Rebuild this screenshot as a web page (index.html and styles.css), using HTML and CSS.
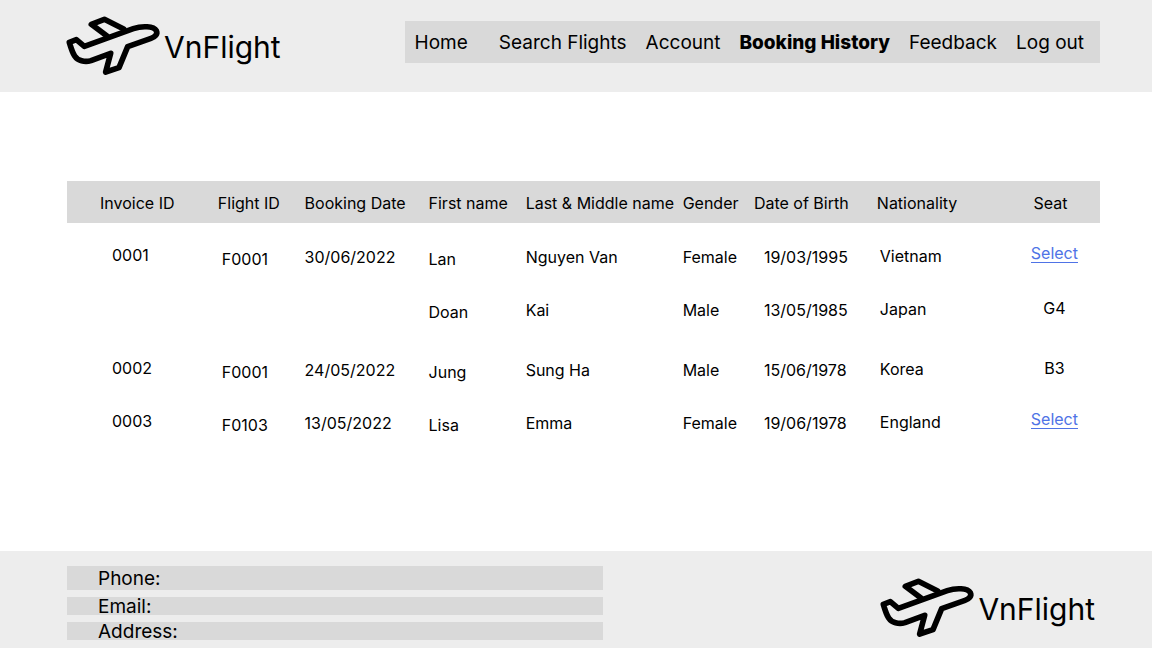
FILE: index.html
```html
<!DOCTYPE html>
<html lang="en">
<head>
<meta charset="utf-8">
<meta name="viewport" content="width=device-width, initial-scale=1">
<title>VnFlight - Booking History</title>
<link rel="stylesheet" href="styles.css">
</head>
<body class="page">
<svg width="0" height="0" class="sprite" aria-hidden="true">
  <symbol id="plane" viewBox="0 0 306 198">
    <path d="M22 91 L43 83 L67 103 L214 50 C240 41 275 42 283 56 C288 66 279 75 267 79 L197 104 L171 167 L131 180 L146 124 L87 146 C68 152 47 146 38 132 C32 123 27 108 22 91 Z"/>
    <path d="M135 72 L88 37 L127 22 L185 51"/>
  </symbol>
</svg>
<header class="site-header">
  <a class="logo" href="#"><svg class="logo-icon" aria-hidden="true"><use href="#plane"/></svg><span class="logo-name">VnFlight</span></a>
  <nav class="nav" aria-label="Main">
    <a class="nav-link nav-home" href="#">Home</a>
    <a class="nav-link" href="#">Search Flights</a>
    <a class="nav-link" href="#">Account</a>
    <a class="nav-link nav-current" href="#" aria-current="page">Booking History</a>
    <a class="nav-link" href="#">Feedback</a>
    <a class="nav-link" href="#">Log out</a>
  </nav>
</header>
<main class="content">
  <table class="bookings">
    <colgroup>
      <col class="w-invoice"><col class="w-flight"><col class="w-date"><col class="w-first"><col class="w-last"><col class="w-gender"><col class="w-birth"><col class="w-nation"><col class="w-seat">
    </colgroup>
    <thead>
      <tr>
        <th scope="col" class="invoice">Invoice ID</th><th scope="col">Flight ID</th><th scope="col">Booking Date</th><th scope="col">First name</th><th scope="col">Last &amp; Middle name</th><th scope="col">Gender</th><th scope="col">Date of Birth</th><th scope="col">Nationality</th><th scope="col" class="seat">Seat</th>
      </tr>
    </thead>
    <tbody class="booking">
      <tr><td class="invoice">0001</td><td class="flight">F0001</td><td>30/06/2022</td><td class="first">Lan</td><td>Nguyen Van</td><td>Female</td><td class="birth">19/03/1995</td><td class="nation">Vietnam</td><td class="seat"><a class="select" href="#">Select</a></td></tr>
      <tr class="passenger"><td class="invoice"></td><td class="flight"></td><td></td><td class="first">Doan</td><td>Kai</td><td>Male</td><td class="birth">13/05/1985</td><td class="nation">Japan</td><td class="seat">G4</td></tr>
    </tbody>
    <tbody class="booking">
      <tr><td class="invoice">0002</td><td class="flight">F0001</td><td>24/05/2022</td><td class="first">Jung</td><td>Sung Ha</td><td>Male</td><td class="birth">15/06/1978</td><td class="nation">Korea</td><td class="seat">B3</td></tr>
    </tbody>
    <tbody class="booking">
      <tr><td class="invoice">0003</td><td class="flight">F0103</td><td>13/05/2022</td><td class="first">Lisa</td><td>Emma</td><td>Female</td><td class="birth">19/06/1978</td><td class="nation">England</td><td class="seat"><a class="select" href="#">Select</a></td></tr>
    </tbody>
  </table>
</main>
<footer class="site-footer">
  <address class="contact">
    <p class="contact-line contact-phone">Phone:</p>
    <p class="contact-line">Email:</p>
    <p class="contact-line">Address:</p>
  </address>
  <a class="logo" href="#"><svg class="logo-icon" aria-hidden="true"><use href="#plane"/></svg><span class="logo-name">VnFlight</span></a>
</footer>
</body>
</html>
```
FILE: styles.css
```css
* { box-sizing: border-box; }
.page {
  margin: 0;
  min-height: 100vh;
  display: flex;
  flex-direction: column;
  background: #fff;
  color: #000;
  font-family: Inter, "Liberation Sans", sans-serif;
  font-size: 16px;
  font-weight: 400;
}
.sprite { position: absolute; }
.site-header {
  display: flex;
  align-items: center;
  justify-content: space-between;
  padding: 12px 52px 14px 62px;
  background: #ededed;
}
.logo {
  display: flex;
  align-items: center;
  color: #000;
  font-size: 30px;
  line-height: 36px;
  text-decoration: none;
}
.logo-name { padding-top: 4px; }
.logo-icon {
  width: 102px;
  height: 66px;
  fill: none;
  stroke: #000;
  stroke-width: 17;
  stroke-linecap: round;
  stroke-linejoin: round;
}
.nav {
  display: flex;
  gap: 19px;
  align-self: flex-start;
  margin-top: 9px;
  padding: 10px 16px 8px 10px;
  background: #d9d9d9;
  white-space: nowrap;
}
.nav-link {
  color: #000;
  font-size: 19px;
  line-height: 24px;
  text-decoration: none;
}
.nav-home { margin-right: 12px; }
.nav-current { font-weight: 800; }
.content {
  flex: 1;
  padding: 89px 52px 89px 67px;
}
.bookings {
  width: 100%;
  table-layout: fixed;
  border-collapse: separate;
  border-spacing: 0;
  line-height: 20px;
  white-space: nowrap;
}
.w-invoice { width: 14.6%; }
.w-flight { width: 8.4%; }
.w-date { width: 12%; }
.w-first { width: 9.4%; }
.w-last { width: 15.2%; }
.w-gender { width: 6.9%; }
.w-birth { width: 11.9%; }
.w-nation { width: 12%; }
.bookings th {
  padding: 12px 0 10px;
  background: #d9d9d9;
  font-weight: 400;
  text-align: left;
}
.bookings th.invoice { padding-left: 33px; }
.bookings td { height: 53px; padding: 0; }
.bookings td.invoice { padding: 0 0 4px 45px; }
.bookings td.flight { padding: 4px 0 0 4px; }
.bookings td.first { padding-top: 4px; }
.bookings td.birth { padding-left: 10px; }
.bookings td.nation { padding: 0 0 2px 3px; }
.bookings .seat { text-align: center; }
.bookings td.seat { padding: 0 0 4px 8px; }
.bookings thead + .booking tr:first-child td {
  height: 60px;
  border-top: 7px solid transparent;
}
.bookings .passenger td {
  height: 60px;
  border-bottom: 7px solid transparent;
}
.select {
  display: inline-block;
  margin-bottom: 4px;
  border-bottom: 1px solid #4f73e6;
  color: #4f73e6;
  line-height: 18px;
  text-decoration: none;
}
.site-footer {
  display: flex;
  justify-content: space-between;
  align-items: flex-start;
  padding: 15px 57px 8px 67px;
  background: #ededed;
}
.contact {
  flex: 0 1 536px;
  display: flex;
  flex-direction: column;
  gap: 7px;
  font-style: normal;
}
.contact-line {
  margin: 0;
  padding: 2px 0 0 31px;
  background: #d9d9d9;
  font-size: 19px;
  line-height: 16px;
}
.contact-phone { line-height: 22px; }
.site-footer .logo { margin-top: 8px; }
```
